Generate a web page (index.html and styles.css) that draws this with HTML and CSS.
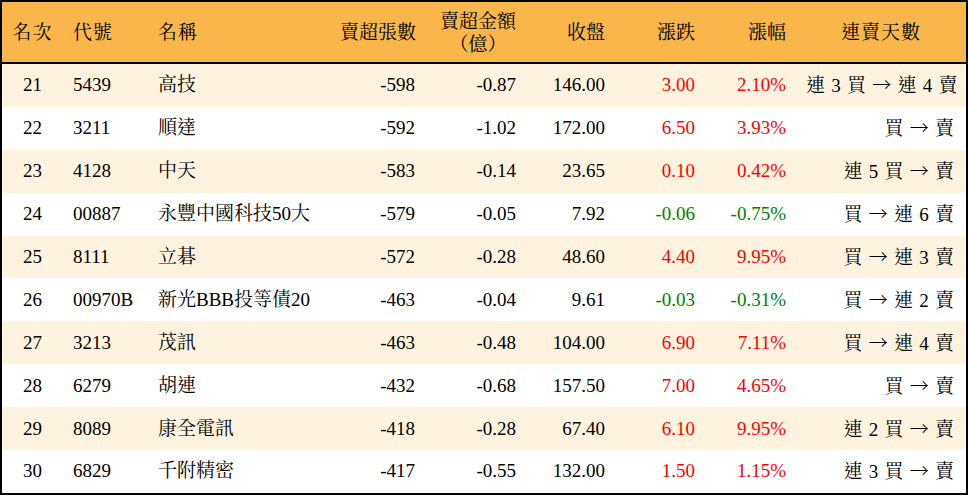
FILE: index.html
```html
<!DOCTYPE html>
<html lang="zh-Hant">
<head>
<meta charset="utf-8">
<title>賣超排行</title>
<link rel="stylesheet" href="styles.css">
</head>
<body>
<table class="rank">
  <colgroup>
    <col class="c-rank"><col class="c-code"><col class="c-name"><col class="c-vol"><col class="c-amt"><col class="c-close"><col class="c-chg"><col class="c-pct"><col class="c-days">
  </colgroup>
  <thead>
    <tr>
      <th class="center">名次</th>
      <th class="left">代號</th>
      <th class="left">名稱</th>
      <th class="right">賣超張數</th>
      <th class="right"><span class="stack">賣超金額<br>（億）</span></th>
      <th class="right">收盤</th>
      <th class="right">漲跌</th>
      <th class="right">漲幅</th>
      <th class="center">連賣天數</th>
    </tr>
  </thead>
  <tbody>
    <tr class="odd"><td class="center">21</td><td class="left">5439</td><td class="left">高技</td><td class="right">-598</td><td class="right">-0.87</td><td class="right">146.00</td><td class="right up">3.00</td><td class="right up">2.10%</td><td class="right days">連 3 買 <span class="arrow">→</span> 連 4 賣</td></tr>
    <tr><td class="center">22</td><td class="left">3211</td><td class="left">順達</td><td class="right">-592</td><td class="right">-1.02</td><td class="right">172.00</td><td class="right up">6.50</td><td class="right up">3.93%</td><td class="right days">買 <span class="arrow">→</span> 賣</td></tr>
    <tr class="odd"><td class="center">23</td><td class="left">4128</td><td class="left">中天</td><td class="right">-583</td><td class="right">-0.14</td><td class="right">23.65</td><td class="right up">0.10</td><td class="right up">0.42%</td><td class="right days">連 5 買 <span class="arrow">→</span> 賣</td></tr>
    <tr><td class="center">24</td><td class="left">00887</td><td class="left">永豐中國科技50大</td><td class="right">-579</td><td class="right">-0.05</td><td class="right">7.92</td><td class="right down">-0.06</td><td class="right down">-0.75%</td><td class="right days">買 <span class="arrow">→</span> 連 6 賣</td></tr>
    <tr class="odd"><td class="center">25</td><td class="left">8111</td><td class="left">立碁</td><td class="right">-572</td><td class="right">-0.28</td><td class="right">48.60</td><td class="right up">4.40</td><td class="right up">9.95%</td><td class="right days">買 <span class="arrow">→</span> 連 3 賣</td></tr>
    <tr><td class="center">26</td><td class="left">00970B</td><td class="left">新光BBB投等債20</td><td class="right">-463</td><td class="right">-0.04</td><td class="right">9.61</td><td class="right down">-0.03</td><td class="right down">-0.31%</td><td class="right days">買 <span class="arrow">→</span> 連 2 賣</td></tr>
    <tr class="odd"><td class="center">27</td><td class="left">3213</td><td class="left">茂訊</td><td class="right">-463</td><td class="right">-0.48</td><td class="right">104.00</td><td class="right up">6.90</td><td class="right up">7.11%</td><td class="right days">買 <span class="arrow">→</span> 連 4 賣</td></tr>
    <tr><td class="center">28</td><td class="left">6279</td><td class="left">胡連</td><td class="right">-432</td><td class="right">-0.68</td><td class="right">157.50</td><td class="right up">7.00</td><td class="right up">4.65%</td><td class="right days">買 <span class="arrow">→</span> 賣</td></tr>
    <tr class="odd"><td class="center">29</td><td class="left">8089</td><td class="left">康全電訊</td><td class="right">-418</td><td class="right">-0.28</td><td class="right">67.40</td><td class="right up">6.10</td><td class="right up">9.95%</td><td class="right days">連 2 買 <span class="arrow">→</span> 賣</td></tr>
    <tr><td class="center">30</td><td class="left">6829</td><td class="left">千附精密</td><td class="right">-417</td><td class="right">-0.55</td><td class="right">132.00</td><td class="right up">1.50</td><td class="right up">1.15%</td><td class="right days">連 3 買 <span class="arrow">→</span> 賣</td></tr>
  </tbody>
</table>
</body>
</html>
```
FILE: styles.css
```css
html, body {
  margin: 0;
  padding: 0;
  background: #ffffff;
}

.rank {
  width: 968px;
  border-collapse: separate;
  border-spacing: 0;
  border: 2px solid #000;
  table-layout: fixed;
  font-family: "Liberation Serif", "Noto Serif CJK TC", "Noto Sans CJK TC", serif;
  font-size: 19px;
  color: #000;
}

.c-rank { width: 61px; }
.c-code { width: 85px; }
.c-name { width: 182px; }
.c-vol { width: 95px; }
.c-amt { width: 101px; }
.c-close { width: 89px; }
.c-chg { width: 90px; }
.c-pct { width: 91px; }
.c-days { width: 170px; }

.rank thead tr {
  background: #f9b74b;
}

.rank th {
  font-weight: normal;
  padding: 0 10px;
  height: 60px;
  line-height: 23px;
  letter-spacing: 1px;
  white-space: nowrap;
  border-bottom: 2px solid #000;
}

.rank th.right {
  letter-spacing: 0;
  padding-right: 10px;
}

.rank td {
  padding: 0 10px;
  height: 42.9px;
  line-height: 22px;
  white-space: nowrap;
}

.rank td.days {
  padding-right: 12px;
  word-spacing: 1.5px;
}

.rank tbody tr.odd {
  background: #fef3df;
}

.stack {
  display: inline-block;
  text-align: center;
  padding-top: 1px;
}

.arrow {
  font-family: "Noto Sans CJK TC", sans-serif;
  font-weight: 300;
}

.left { text-align: left; }
.right { text-align: right; }
.center { text-align: center; }

.up { color: #ff0000; }
.down { color: #008000; }
```
